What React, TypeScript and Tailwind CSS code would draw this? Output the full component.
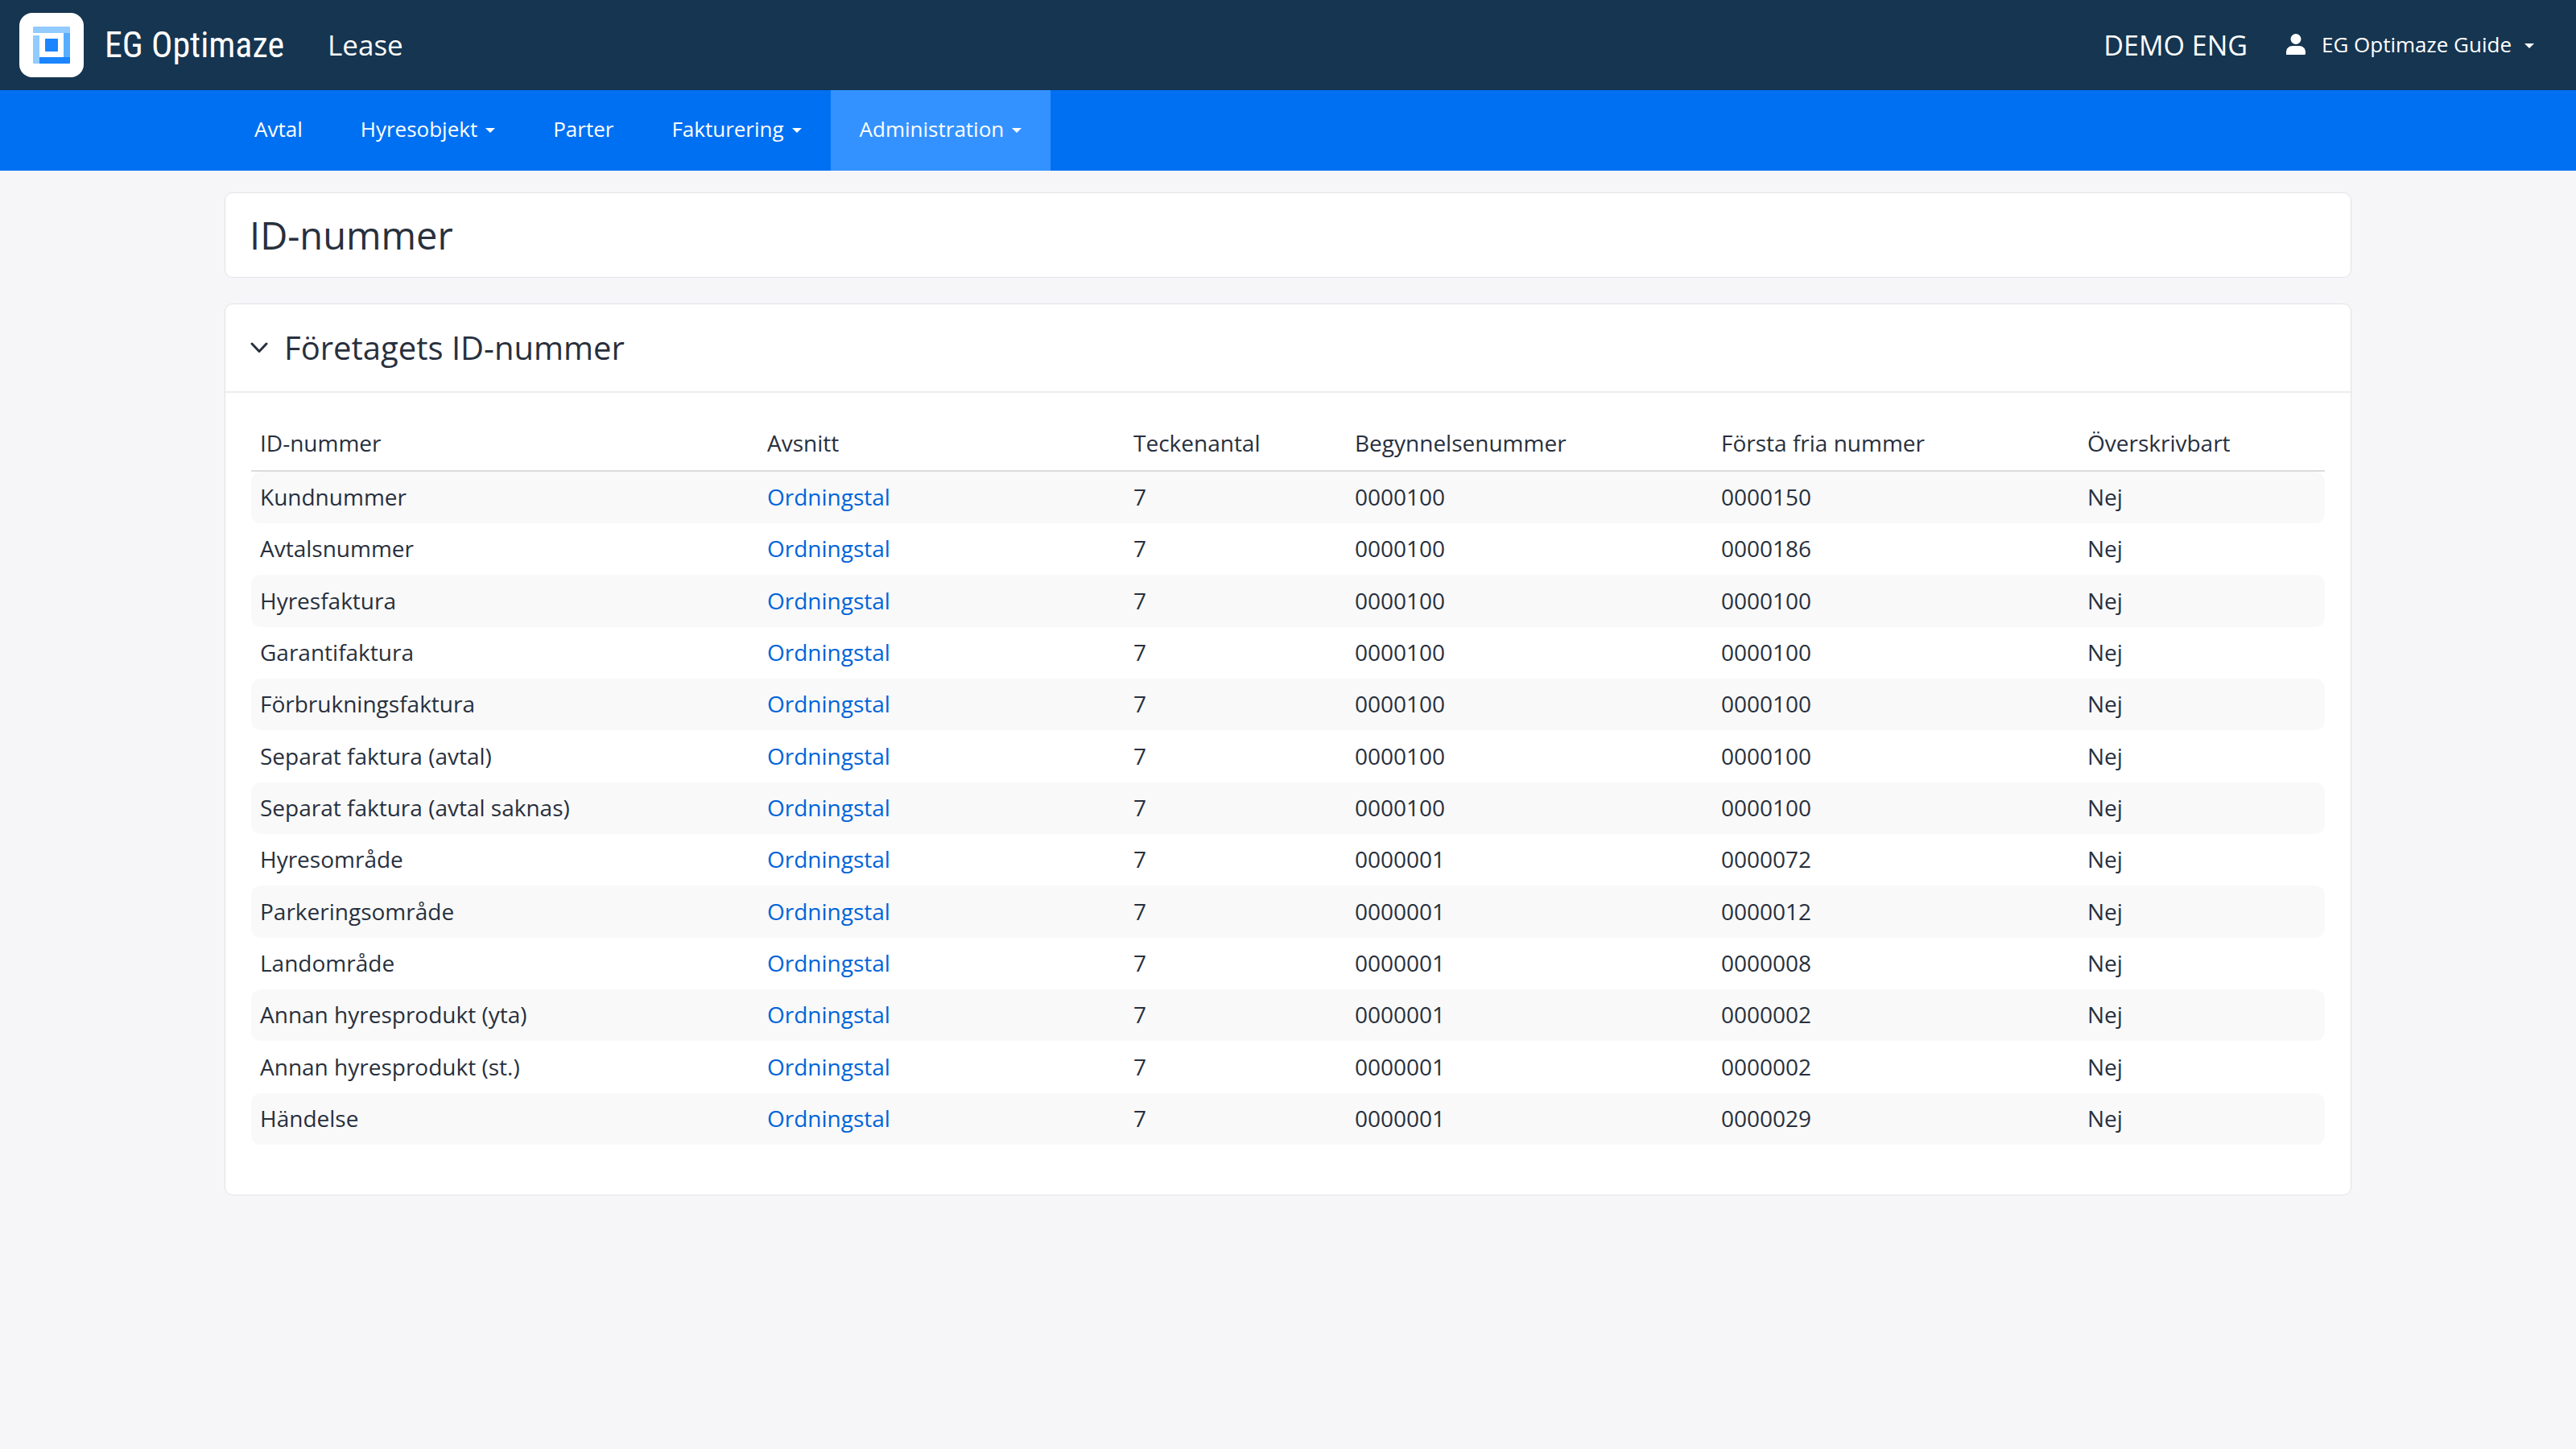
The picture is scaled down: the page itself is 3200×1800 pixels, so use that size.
"use client";

import { useState } from "react";

const navItems = [
  { name: "Avtal", menu: false },
  { name: "Hyresobjekt", menu: true },
  { name: "Parter", menu: false },
  { name: "Fakturering", menu: true },
  { name: "Administration", menu: true },
];

const columns = [
  { title: "ID-nummer", width: "w-[630px]" },
  { title: "Avsnitt", width: "w-[455px]" },
  { title: "Teckenantal", width: "w-[275px]" },
  { title: "Begynnelsenummer", width: "w-[455px]" },
  { title: "Första fria nummer", width: "w-[455px]" },
  { title: "Överskrivbart", width: "w-[306px]" },
];

const series = [
  { name: "Kundnummer", first: "0000100", next: "0000150" },
  { name: "Avtalsnummer", first: "0000100", next: "0000186" },
  { name: "Hyresfaktura", first: "0000100", next: "0000100" },
  { name: "Garantifaktura", first: "0000100", next: "0000100" },
  { name: "Förbrukningsfaktura", first: "0000100", next: "0000100" },
  { name: "Separat faktura (avtal)", first: "0000100", next: "0000100" },
  { name: "Separat faktura (avtal saknas)", first: "0000100", next: "0000100" },
  { name: "Hyresområde", first: "0000001", next: "0000072" },
  { name: "Parkeringsområde", first: "0000001", next: "0000012" },
  { name: "Landområde", first: "0000001", next: "0000008" },
  { name: "Annan hyresprodukt (yta)", first: "0000001", next: "0000002" },
  { name: "Annan hyresprodukt (st.)", first: "0000001", next: "0000002" },
  { name: "Händelse", first: "0000001", next: "0000029" },
];

function Caret() {
  return (
    <svg viewBox="0 0 12 6" className="w-3 h-1.5 mt-1" fill="currentColor" aria-hidden="true">
      <path d="M0 0h12L6 6z" />
    </svg>
  );
}

function Logo() {
  return (
    <svg viewBox="0 0 80 80" className="size-20 shrink-0" aria-hidden="true">
      <rect width="80" height="80" rx="16" fill="#fff" />
      <path d="M18 17h44a1 1 0 0 1 1 1v7H17v-7a1 1 0 0 1 1-1z" fill="#92cbff" />
      <path d="M18 28h7v35h-7a1 1 0 0 1-1-1V29a1 1 0 0 1 1-1z" fill="#92cbff" />
      <rect x="55" y="25" width="8" height="30" fill="#57adff" />
      <path d="M25 55h38v7a1 1 0 0 1-1 1H25z" fill="#1a85ff" />
      <rect x="32" y="32" width="16" height="16" rx="1" fill="#1a85ff" />
    </svg>
  );
}

export default function App() {
  const [open, setOpen] = useState(true);

  return (
    <div className="min-h-screen bg-[#f6f6f9] text-[#28303d] text-[28px] font-['Open_Sans',sans-serif]">
      <header className="h-28 bg-[#153550] text-white flex items-center pl-6 pr-[52px]">
        <a href="#" className="flex items-center gap-[26px]">
          <Logo />
          <span className="text-[44px] font-['Roboto_Condensed','Roboto',sans-serif]">EG Optimaze</span>
        </a>
        <a href="#" className="ml-[54px] text-[35px]">
          Lease
        </a>
        <span className="ml-auto text-[34px]">DEMO ENG</span>
        <button className="ml-12 pb-0.5 flex items-center text-[26px]">
          <svg viewBox="0 0 24 26" className="w-6 h-[26px] mr-5" fill="currentColor" aria-hidden="true">
            <circle cx="12" cy="6.5" r="6.5" />
            <path d="M0 26v-3c0-5 3.500-8 8-8h8c4.500 0 8 3 8 8v1.500a1.500 1.500 0 0 1-1.500 1.500z" />
          </svg>
          EG Optimaze Guide
          <span className="ml-4">
            <Caret />
          </span>
        </button>
      </header>

      <nav className="h-[100px] bg-[#0070f2] text-white">
        <div className="max-w-[2640px] h-full mx-auto flex">
          {navItems.map((item) => (
            <button
              key={item.name}
              className={`h-full px-9 pb-1 flex items-center gap-2.5 text-[26px] ${
                item.name === "Administration" ? "bg-[#3392ff]" : ""
              }`}
            >
              {item.name}
              {item.menu && <Caret />}
            </button>
          ))}
        </div>
      </nav>

      <main className="max-w-[2642px] mx-auto pt-[27px] space-y-8">
        <section className="h-[106px] flex items-center px-[30px] bg-white border border-[#e1e3e6] rounded-[10px]">
          <h1 className="text-[47px]">ID-nummer</h1>
        </section>

        <section className="bg-white border border-[#e1e3e6] rounded-[10px]">
          <h2 className="border-b-2 border-[#ededee]">
            <button
              className="w-full h-[108px] flex items-center gap-5 px-[31px] text-[40px]"
              onClick={() => setOpen(!open)}
            >
              <svg
                viewBox="0 0 22 14"
                className="w-[22px] h-3.5"
                fill="none"
                stroke="currentColor"
                strokeWidth="3"
                strokeLinecap="round"
                strokeLinejoin="round"
                aria-hidden="true"
              >
                <path d="M2 2l9 9.500L20 2" />
              </svg>
              Företagets ID-nummer
            </button>
          </h2>

          {open && (
            <div className="px-8 pt-[30px] pb-[62px]">
              <table className="w-full table-fixed border-separate border-spacing-0 text-left">
                <thead>
                  <tr>
                    {columns.map((col) => (
                      <th
                        key={col.title}
                        className={`h-[68px] px-[11px] pb-0.5 border-b-2 border-[#dcdcdd] font-medium ${col.width}`}
                      >
                        {col.title}
                      </th>
                    ))}
                  </tr>
                </thead>
                <tbody>
                  {series.map((row) => (
                    <tr
                      key={row.name}
                      className="h-16 nth-[3n]:h-[65px] odd:*:bg-[#f9f9f9] *:px-[11px] *:pb-0.5 *:first:rounded-l-xl *:last:rounded-r-xl"
                    >
                      <td>{row.name}</td>
                      <td>
                        <a href="#" className="text-[#0064d9]">
                          Ordningstal
                        </a>
                      </td>
                      <td>7</td>
                      <td>{row.first}</td>
                      <td>{row.next}</td>
                      <td>Nej</td>
                    </tr>
                  ))}
                </tbody>
              </table>
            </div>
          )}
        </section>
      </main>
    </div>
  );
}
